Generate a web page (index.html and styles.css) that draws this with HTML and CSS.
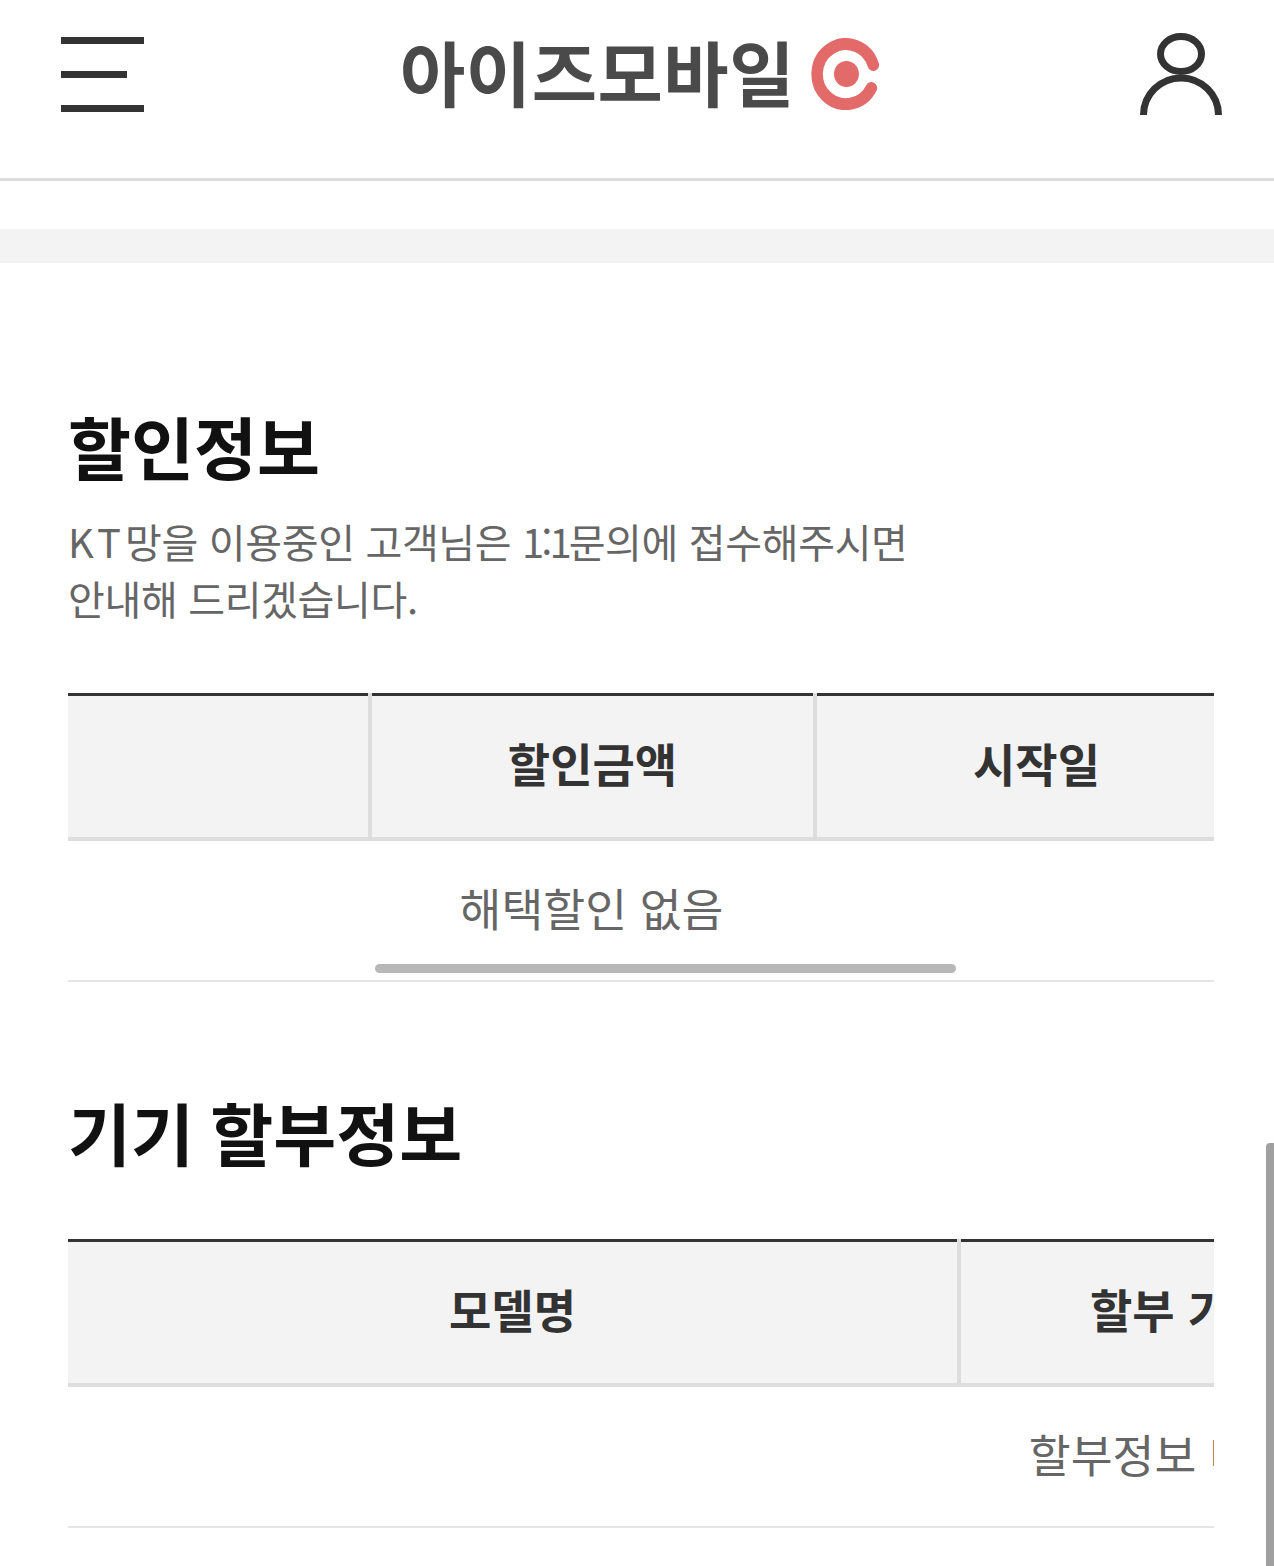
FILE: index.html
```html
<!DOCTYPE html>
<html lang="ko">
<head>
  <meta charset="UTF-8" />
  <meta name="viewport" content="width=device-width, initial-scale=1.0" />
  <title>아이즈모바일</title>
  <link rel="stylesheet" href="styles.css">
</head>
<body>
  <header class="top-bar">
    <button class="menu-button" aria-label="메뉴">
      <span class="menu-line"></span>
      <span class="menu-line menu-line-short"></span>
      <span class="menu-line"></span>
    </button>
    <a class="logo">
      <span class="logo-text">아이즈모바일</span>
      <svg class="logo-mark" viewBox="0 0 72 72" width="69" height="72" preserveAspectRatio="none" aria-hidden="true">
        <path d="M65 27A30 30 0 1 0 63 50" fill="none" stroke="#e26a68" stroke-width="12" stroke-linecap="round"/>
        <circle cx="37" cy="36" r="13" fill="#e26a68"/>
      </svg>
    </a>
    <svg class="user-icon" viewBox="0 0 82 82" width="82" height="82" aria-hidden="true">
      <ellipse cx="41" cy="21" rx="20.5" ry="17.5" fill="none" stroke="#333" stroke-width="7"/>
      <path d="M3.5 82A37.5 37 0 0 1 78.5 82" fill="none" stroke="#333" stroke-width="7"/>
    </svg>
  </header>

  <div class="band"></div>

  <main class="content">
    <section class="discount">
      <h2 class="section-title">할인정보</h2>
      <p class="section-desc"><span class="desc-kt">KT</span>망을 이용중인 고객님은 <span class="desc-ratio">1:1</span>문의에 접수해주시면<br>안내해 드리겠습니다.</p>
      <div class="table-wrap">
        <table class="info-table discount-table">
          <colgroup>
            <col class="col-a"><col class="col-b"><col class="col-c"><col class="col-d">
          </colgroup>
          <thead>
            <tr><th></th><th>할인금액</th><th>시작일</th><th>종료일</th></tr>
          </thead>
          <tbody>
            <tr><td></td><td>해택할인 없음</td><td></td><td></td></tr>
          </tbody>
        </table>
        <div class="h-scroll"></div>
      </div>
    </section>

    <section class="installment">
      <h2 class="section-title">기기 할부정보</h2>
      <div class="table-wrap">
        <table class="info-table installment-table">
          <colgroup>
            <col class="col-e"><col class="col-f"><col class="col-g">
          </colgroup>
          <thead>
            <tr><th>모델명</th><th>할부 기간</th><th>할부 잔액</th></tr>
          </thead>
          <tbody>
            <tr><td colspan="3">할부정보 내역 없음</td></tr>
          </tbody>
        </table>
      </div>
    </section>
  </main>

  <div class="page-scroll"></div>
</body>
</html>
```

FILE: styles.css
```css
* {
  margin: 0;
  padding: 0;
  box-sizing: border-box;
  font-family: "Noto Sans CJK KR", "Noto Sans", sans-serif;
}

html, body {
  height: 100%;
  overflow: hidden;
  background: #fff;
}

.top-bar {
  height: 181px;
  padding: 33px 52px 0 61px;
  border-bottom: 3px solid #ddd;
  display: flex;
  justify-content: space-between;
  align-items: flex-start;
}

.menu-button {
  width: 83px;
  height: 75px;
  margin-top: 4px;
  background: none;
  border: none;
  display: flex;
  flex-direction: column;
  justify-content: space-between;
}

.menu-line {
  display: block;
  width: 83px;
  height: 7px;
  background: #333;
}

.menu-line-short {
  width: 66px;
}

.logo {
  display: flex;
  align-items: center;
  gap: 16px;
  margin-top: 3px;
  margin-right: 4px;
}

.logo-text {
  font-size: 71px;
  line-height: 68px;
  margin-bottom: 8px;
  font-weight: 700;
  letter-spacing: 0.5px;
  color: #4a4a4a;
}

.user-icon {
  display: block;
}

.band {
  height: 34px;
  margin-top: 48px;
  background: #f3f3f3;
}

.content {
  padding: 0 60px 0 68px;
}

.section-title {
  font-size: 68.5px;
  line-height: 80px;
  font-weight: 700;
  word-spacing: -3px;
  color: #111;
}

.discount {
  padding-top: 143px;
}

.section-desc {
  margin-top: 27px;
  font-size: 40px;
  line-height: 57px;
  letter-spacing: -0.35px;
  color: #666;
}

.desc-kt {
  letter-spacing: 4px;
}

.desc-ratio {
  letter-spacing: -3px;
}

.table-wrap {
  position: relative;
  overflow: hidden;
}

.discount .table-wrap {
  margin-top: 66px;
}

.installment {
  padding-top: 110px;
}

.installment .table-wrap {
  margin-top: 67px;
}

.info-table {
  table-layout: fixed;
  border-collapse: separate;
  border-spacing: 0;
  width: 2288px;
}

.col-a { width: 304px; }
.col-b { width: 445px; }
.col-c { width: 443px; }
.col-d { width: 1096px; }
.col-e { width: 893px; }
.col-f { width: 444px; }
.col-g { width: 951px; }

.info-table th {
  height: 148px;
  padding-bottom: 6px;
  background: #f3f3f3;
  box-shadow: inset 0 3px #333;
  border-bottom: 4px solid #ddd;
  border-right: 4px solid #ddd;
  font-size: 46px;
  font-weight: 700;
  color: #333;
  text-align: center;
}

.info-table th:last-child {
  border-right: none;
}

.info-table td {
  height: 141px;
  padding: 0 6px 8px 0;
  border-bottom: 2px solid #e5e5e5;
  font-size: 45.5px;
  color: #666;
  text-align: center;
}

.h-scroll {
  position: absolute;
  left: 307px;
  bottom: 9px;
  width: 581px;
  height: 9px;
  border-radius: 5px;
  background: #b8b8b8;
}

.page-scroll {
  position: absolute;
  top: 1143px;
  right: 0;
  width: 8px;
  height: 423px;
  border-radius: 4px 0 0 0;
  background: #a0a0a0;
}
```
